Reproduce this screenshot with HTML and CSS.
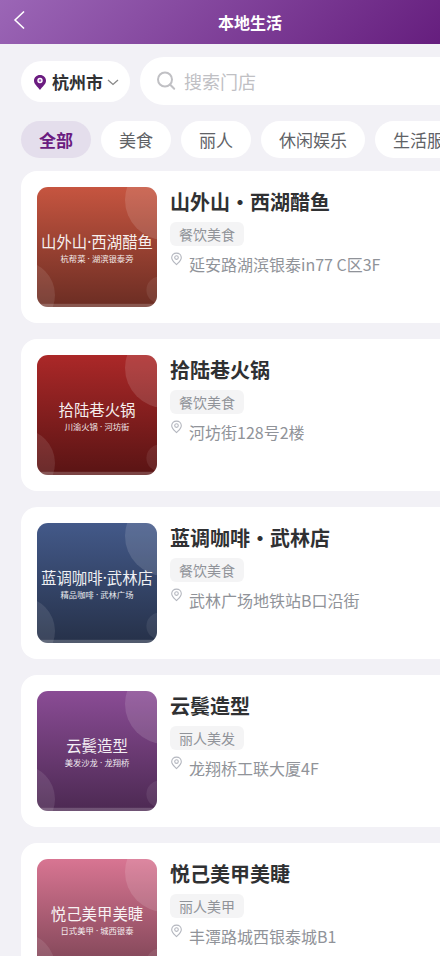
FILE: index.html
```html
<!DOCTYPE html>
<html lang="zh-CN">
<head>
<meta charset="utf-8">
<meta name="viewport" content="width=device-width, initial-scale=1">
<title>本地生活</title>
<link rel="stylesheet" href="styles.css">
</head>
<body>
<svg class="defs" aria-hidden="true">
  <symbol id="pin" viewBox="0 0 12 14"><path d="M6 1.1C3.2 1.1 1.2 3.1 1.2 5.7C1.2 8.6 4 10.5 6 12.5C8 10.5 10.8 8.6 10.8 5.7C10.8 3.1 8.8 1.1 6 1.1Z"/><circle cx="6" cy="5.6" r="1.8"/></symbol>
  <symbol id="deco" viewBox="0 0 120 120"><g fill="#fff"><circle cx="128" cy="13" r="40" opacity=".13"/><circle cx="-16" cy="108" r="34" opacity=".1"/><circle cx="123" cy="103" r="13.6" opacity=".08"/><rect y="116.8" width="120" height="3.2" opacity=".2"/></g></symbol>
</svg>
<header class="nav">
  <svg class="back" viewBox="0 0 12 18"><path d="M10.5 1L2 9L10.5 17"/></svg>
  <h1>本地生活</h1>
</header>
<main>
  <div class="tools">
    <button class="city">
      <svg class="city-pin" viewBox="0 0 12 15"><path d="M6 0C2.5 0 0 2.5 0 5.8C0 9.4 3.5 11.4 6 15C8.5 11.4 12 9.4 12 5.8C12 2.5 9.5 0 6 0Z" fill="#6b1c80"/><circle cx="6" cy="5.5" r="2" fill="#9b59b6" stroke="#fff" stroke-width="1.4"/></svg>
      <span>杭州市</span>
      <svg class="chevron" viewBox="0 0 12 7"><path d="M1 1L6 5.5L11 1"/></svg>
    </button>
    <div class="search">
      <svg viewBox="0 0 20 20"><circle cx="9" cy="8.5" r="7"/><path d="M14 13.5L18.2 17.7"/></svg>
      <span>搜索门店</span>
    </div>
  </div>
  <nav class="tabs"><span class="tab active">全部</span><span class="tab">美食</span><span class="tab">丽人</span><span class="tab">休闲娱乐</span><span class="tab">生活服务</span></nav>
  <section class="list">
    <article class="card">
      <svg class="thumb fish" viewBox="0 0 120 120"><use href="#deco"/><text class="name" x="60" y="60.6">山外山·西湖醋鱼</text><text class="sub" x="60" y="75.4">杭帮菜 · 湖滨银泰旁</text></svg>
      <div class="info"><h2>山外山・西湖醋鱼</h2><span class="tag">餐饮美食</span><p><svg><use href="#pin"/></svg><span>延安路湖滨银泰in77 C区3F</span></p></div>
    </article>
    <article class="card">
      <svg class="thumb hotpot" viewBox="0 0 120 120"><use href="#deco"/><text class="name" x="60" y="60.6">拾陆巷火锅</text><text class="sub" x="60" y="75.4">川渝火锅 · 河坊街</text></svg>
      <div class="info"><h2>拾陆巷火锅</h2><span class="tag">餐饮美食</span><p><svg><use href="#pin"/></svg><span>河坊街128号2楼</span></p></div>
    </article>
    <article class="card">
      <svg class="thumb coffee" viewBox="0 0 120 120"><use href="#deco"/><text class="name" x="60" y="60.6">蓝调咖啡·武林店</text><text class="sub" x="60" y="75.4">精品咖啡 · 武林广场</text></svg>
      <div class="info"><h2>蓝调咖啡・武林店</h2><span class="tag">餐饮美食</span><p><svg><use href="#pin"/></svg><span>武林广场地铁站B口沿街</span></p></div>
    </article>
    <article class="card">
      <svg class="thumb hair" viewBox="0 0 120 120"><use href="#deco"/><text class="name" x="60" y="60.6">云鬓造型</text><text class="sub" x="60" y="75.4">美发沙龙 · 龙翔桥</text></svg>
      <div class="info"><h2>云鬓造型</h2><span class="tag">丽人美发</span><p><svg><use href="#pin"/></svg><span>龙翔桥工联大厦4F</span></p></div>
    </article>
    <article class="card">
      <svg class="thumb nails" viewBox="0 0 120 120"><use href="#deco"/><text class="name" x="60" y="60.6">悦己美甲美睫</text><text class="sub" x="60" y="75.4">日式美甲 · 城西银泰</text></svg>
      <div class="info"><h2>悦己美甲美睫</h2><span class="tag">丽人美甲</span><p><svg><use href="#pin"/></svg><span>丰潭路城西银泰城B1</span></p></div>
    </article>
  </section>
</main>
</body>
</html>
```
FILE: styles.css
```css
* { box-sizing: border-box; }
html, body { height: 956px; overflow: hidden; }
body { margin: 0; background: #f2f1f6; font-family: "Noto Sans CJK SC", sans-serif; color: #303133; }
svg { display: block; flex: none; }
h1, h2, p { margin: 0; }
.defs { position: absolute; width: 0; height: 0; }
.nav { width: 500px; height: 44px; display: grid; grid-template-columns: 32px 1fr 32px; align-items: center; background: linear-gradient(135deg, #9b66b6 0%, #5f1577 100%); }
.back { width: 12px; height: 18px; margin: -4px 0 0 13px; fill: none; stroke: #fff; stroke-width: 1.7; stroke-linecap: round; stroke-linejoin: round; }
.nav h1 { text-align: center; color: #fff; font-size: 16px; line-height: 24px; font-weight: 700; }
main { width: 520px; padding: 13px 21px 0; }
.tools { display: flex; align-items: center; gap: 10px; height: 48px; }
.city { width: 109px; height: 41px; margin-top: 1px; padding: 1px 10px 0 13px; display: flex; align-items: center; border: 0; border-radius: 21px; background: #fff; font: 700 17px/24px "Noto Sans CJK SC", sans-serif; color: #303133; }
.city-pin { width: 12px; height: 15px; margin-right: 6px; }
.chevron { width: 12px; height: 7px; margin-left: 4px; fill: none; stroke: #888; stroke-width: 1.3; }
.search { flex: 1; height: 48px; padding-left: 16px; display: flex; align-items: center; gap: 8px; border-radius: 24px; background: #fff; color: #c0c0c4; font-size: 18px; line-height: 26px; }
.search svg { width: 20px; height: 20px; fill: none; stroke: #c0c0c4; stroke-width: 2; stroke-linecap: round; }
.tabs { display: flex; gap: 10px; margin-top: 16px; }
.tab { flex: none; height: 37px; padding: 0 18px; border-radius: 19px; background: #fff; color: #606266; font-size: 17px; line-height: 38px; white-space: nowrap; }
.tab.active { background: #e4deec; color: #6a1b80; font-weight: 700; }
.list { display: flex; flex-direction: column; gap: 16px; margin-top: 13px; }
.card { display: flex; gap: 13px; height: 152px; padding: 16px; border-radius: 16px; background: #fff; }
.thumb { width: 120px; height: 120px; border-radius: 11px; overflow: hidden; }
.fish { background: linear-gradient(#c65540, #6b2d23); }
.hotpot { background: linear-gradient(#ab2828, #591414); }
.coffee { background: linear-gradient(#435989, #263149); }
.hair { background: linear-gradient(#8a4c95, #4c2952); }
.nails { background: linear-gradient(#d87592, #754050); }
.thumb text { text-anchor: middle; fill: #fff; font-family: "Noto Sans", "Noto Sans CJK SC", sans-serif; }
.name { font-size: 15.4px; opacity: .92; }
.sub { font-size: 8.3px; opacity: .9; }
h2 { height: 30px; font-size: 20px; line-height: 30px; font-weight: 700; white-space: nowrap; }
.tag { display: block; width: 74px; height: 24px; margin-top: 5px; border-radius: 6px; background: #f4f4f5; color: #909399; text-align: center; font-size: 14px; line-height: 25px; }
.info p { display: flex; align-items: flex-start; gap: 6px; margin-top: 6px; color: #909399; font-size: 16px; line-height: 24px; white-space: nowrap; }
.info p svg { width: 13px; height: 14px; fill: none; stroke: #b4b7bf; stroke-width: 1.1; }
```
